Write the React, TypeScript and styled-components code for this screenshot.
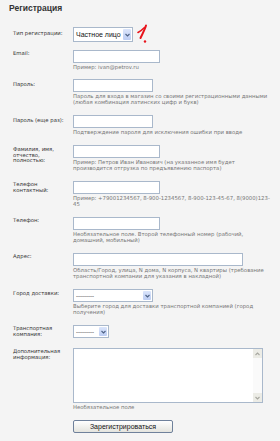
import React from 'react';
import styled, { createGlobalStyle } from 'styled-components';

const GlobalStyle = createGlobalStyle`
  html, body {
    margin: 0;
    padding: 0;
    background: #f4f4f4;
  }
  body {
    font-family: "DejaVu Sans", Verdana, sans-serif;
  }
`;

const Page = styled.div`
  width: 280px;
  min-height: 441px;
  box-sizing: border-box;
  padding: 3px 10px 0 13px;
  background: #f4f4f4;
`;

const Title = styled.h1`
  margin: 0 0 14px -4px;
  font: bold 8.5px/10px "Liberation Sans", Arial, sans-serif;
  color: #333;
`;

const Row = styled.div<{ $gap?: number }>`
  display: flex;
  margin-bottom: ${p => (p.$gap ?? 10)}px;
`;

const Label = styled.div<{ $top?: number }>`
  width: 55px;
  flex-shrink: 0;
  margin-right: 5px;
  padding-top: ${p => (p.$top ?? 1)}px;
  font-size: 5.3px;
  line-height: 5.7px;
  color: #333;
`;

const Field = styled.div`
  flex: 1;
  display: flex;
  flex-direction: column;
  align-items: flex-start;
  min-width: 0;
`;

const Inline = styled.div`
  display: flex;
  align-items: flex-start;
`;

const Input = styled.input<{ $w: number }>`
  width: ${p => p.$w}px;
  height: 13px;
  box-sizing: border-box;
  margin: 0;
  padding: 0 2px;
  border: 1px solid #a9b8cb;
  background: #fff;
  font-size: 6px;
  outline: none;
`;

const Hint = styled.div`
  margin-top: 1px;
  font-size: 5.35px;
  line-height: 6px;
  color: #777;
`;

const SelectBox = styled.div<{ $w: number; $h: number }>`
  width: ${p => p.$w}px;
  height: ${p => p.$h}px;
  box-sizing: border-box;
  display: flex;
  border: 1px solid #a9b8cb;
  background: #fff;
`;

const SelectValue = styled.span<{ $size: number }>`
  flex: 1;
  display: flex;
  align-items: center;
  padding-left: 2px;
  font-family: "Liberation Sans", Arial, sans-serif;
  font-size: ${p => p.$size}px;
  color: #111;
  white-space: nowrap;
  overflow: hidden;
`;

const SelectArrow = styled.span`
  width: 8px;
  margin: 1px;
  display: flex;
  align-items: center;
  justify-content: center;
  border-radius: 1px;
  background: linear-gradient(#dbe5fb, #bccdf3);
`;

const Mark = styled.svg`
  margin: -3px 0 -2px 4px;
`;

const AreaBox = styled.div`
  width: 190px;
  height: 55px;
  box-sizing: border-box;
  display: flex;
  border: 1px solid #a9b8cb;
  background: #fff;
`;

const Area = styled.textarea`
  flex: 1;
  margin: 0;
  border: none;
  resize: none;
  outline: none;
  background: #fff;
`;

const ScrollBar = styled.div`
  width: 9px;
  display: flex;
  flex-direction: column;
  justify-content: space-between;
  background: #fafafa;
`;

const ScrollButton = styled.div`
  height: 9px;
  display: flex;
  align-items: center;
  justify-content: center;
  background: #ecece6;
`;

const Button = styled.button`
  width: 100px;
  height: 13px;
  margin: 0;
  padding: 0;
  border: 1px solid #6f819b;
  border-radius: 2px;
  background: linear-gradient(#ffffff, #e4e4de);
  font: 7px/11px "Liberation Sans", Arial, sans-serif;
  color: #111;
`;

const Chevron = ({ color = '#4d6185', up = false }: { color?: string; up?: boolean }) => (
  <svg width="5" height="4" viewBox="0 0 5 4">
    <path d={up ? 'M0.5 3 L2.5 1 L4.5 3' : 'M0.5 1 L2.5 3 L4.5 1'} fill="none" stroke={color} strokeWidth="1.1" />
  </svg>
);

const Select = ({ w, h, value, size }: { w: number; h: number; value: string; size: number }) => (
  <SelectBox $w={w} $h={h}>
    <SelectValue $size={size}>{value}</SelectValue>
    <SelectArrow>
      <Chevron />
    </SelectArrow>
  </SelectBox>
);

export default function App() {
  return (
    <Page>
      <GlobalStyle />
      <Title>Регистрация</Title>

      <Row $gap={8}>
        <Label $top={4}>Тип регистрации:</Label>
        <Field>
          <Inline>
            <Select w={60} h={15} value="Частное лицо" size={7} />
            <Mark width="11" height="20" viewBox="0 0 11 20">
              <path d="M9 1.5 C8 5 6 9 3.5 14" fill="none" stroke="#e8141c" strokeWidth="2" strokeLinecap="round" />
              <path d="M1 8.5 C3 7.5 5 6 7.5 3.5" fill="none" stroke="#e8141c" strokeWidth="1.6" strokeLinecap="round" />
              <circle cx="8" cy="17.5" r="1.2" fill="#e8141c" />
            </Mark>
          </Inline>
        </Field>
      </Row>

      <Row $gap={9}>
        <Label>Email:</Label>
        <Field>
          <Input $w={87} />
          <Hint>Пример: ivan@petrov.ru</Hint>
        </Field>
      </Row>

      <Row>
        <Label $top={3}>Пароль:</Label>
        <Field>
          <Input $w={80} type="password" />
          <Hint>Пароль для входа в магазин со своими регистрационными данными (любая комбинация латинских цифр и букв)</Hint>
        </Field>
      </Row>

      <Row>
        <Label $top={3}>Пароль (еще раз):</Label>
        <Field>
          <Input $w={80} type="password" />
          <Hint>Подтверждение пароля для исключения ошибки при вводе</Hint>
        </Field>
      </Row>

      <Row>
        <Label $top={2}>Фамилия, имя, отчество, полностью:</Label>
        <Field>
          <Input $w={87} />
          <Hint>Пример: Петров Иван Иванович (на указанное имя будет производится отгрузка по предъявлению паспорта)</Hint>
        </Field>
      </Row>

      <Row>
        <Label>Телефон контактный:</Label>
        <Field>
          <Input $w={87} />
          <Hint>Пример: +79001234567, 8-900-1234567, 8-900-123-45-67, 8(9000)123-45</Hint>
        </Field>
      </Row>

      <Row>
        <Label>Телефон:</Label>
        <Field>
          <Input $w={87} />
          <Hint>Необязательное поле. Второй телефонный номер (рабочий, домашний, мобильный)</Hint>
        </Field>
      </Row>

      <Row>
        <Label>Адрес:</Label>
        <Field>
          <Input $w={170} />
          <Hint>Область/Город, улица, N дома, N корпуса, N квартиры (требование транспортной компании для указания в накладной)</Hint>
        </Field>
      </Row>

      <Row>
        <Label $top={2}>Город доставки:</Label>
        <Field>
          <Select w={80} h={13} value="---------" size={6} />
          <Hint>Выберите город для доставки транспортной компанией (город получения)</Hint>
        </Field>
      </Row>

      <Row>
        <Label>Транспортная компания:</Label>
        <Field>
          <Select w={36} h={13} value="---------" size={6} />
        </Field>
      </Row>

      <Row>
        <Label>Дополнительная информация:</Label>
        <Field>
          <AreaBox>
            <Area />
            <ScrollBar>
              <ScrollButton>
                <Chevron color="#a8a8a0" up />
              </ScrollButton>
              <ScrollButton>
                <Chevron color="#a8a8a0" />
              </ScrollButton>
            </ScrollBar>
          </AreaBox>
          <Hint>Необязательное поле</Hint>
        </Field>
      </Row>

      <Row>
        <Label />
        <Field>
          <Button type="button">Зарегистрироваться</Button>
        </Field>
      </Row>
    </Page>
  );
}
